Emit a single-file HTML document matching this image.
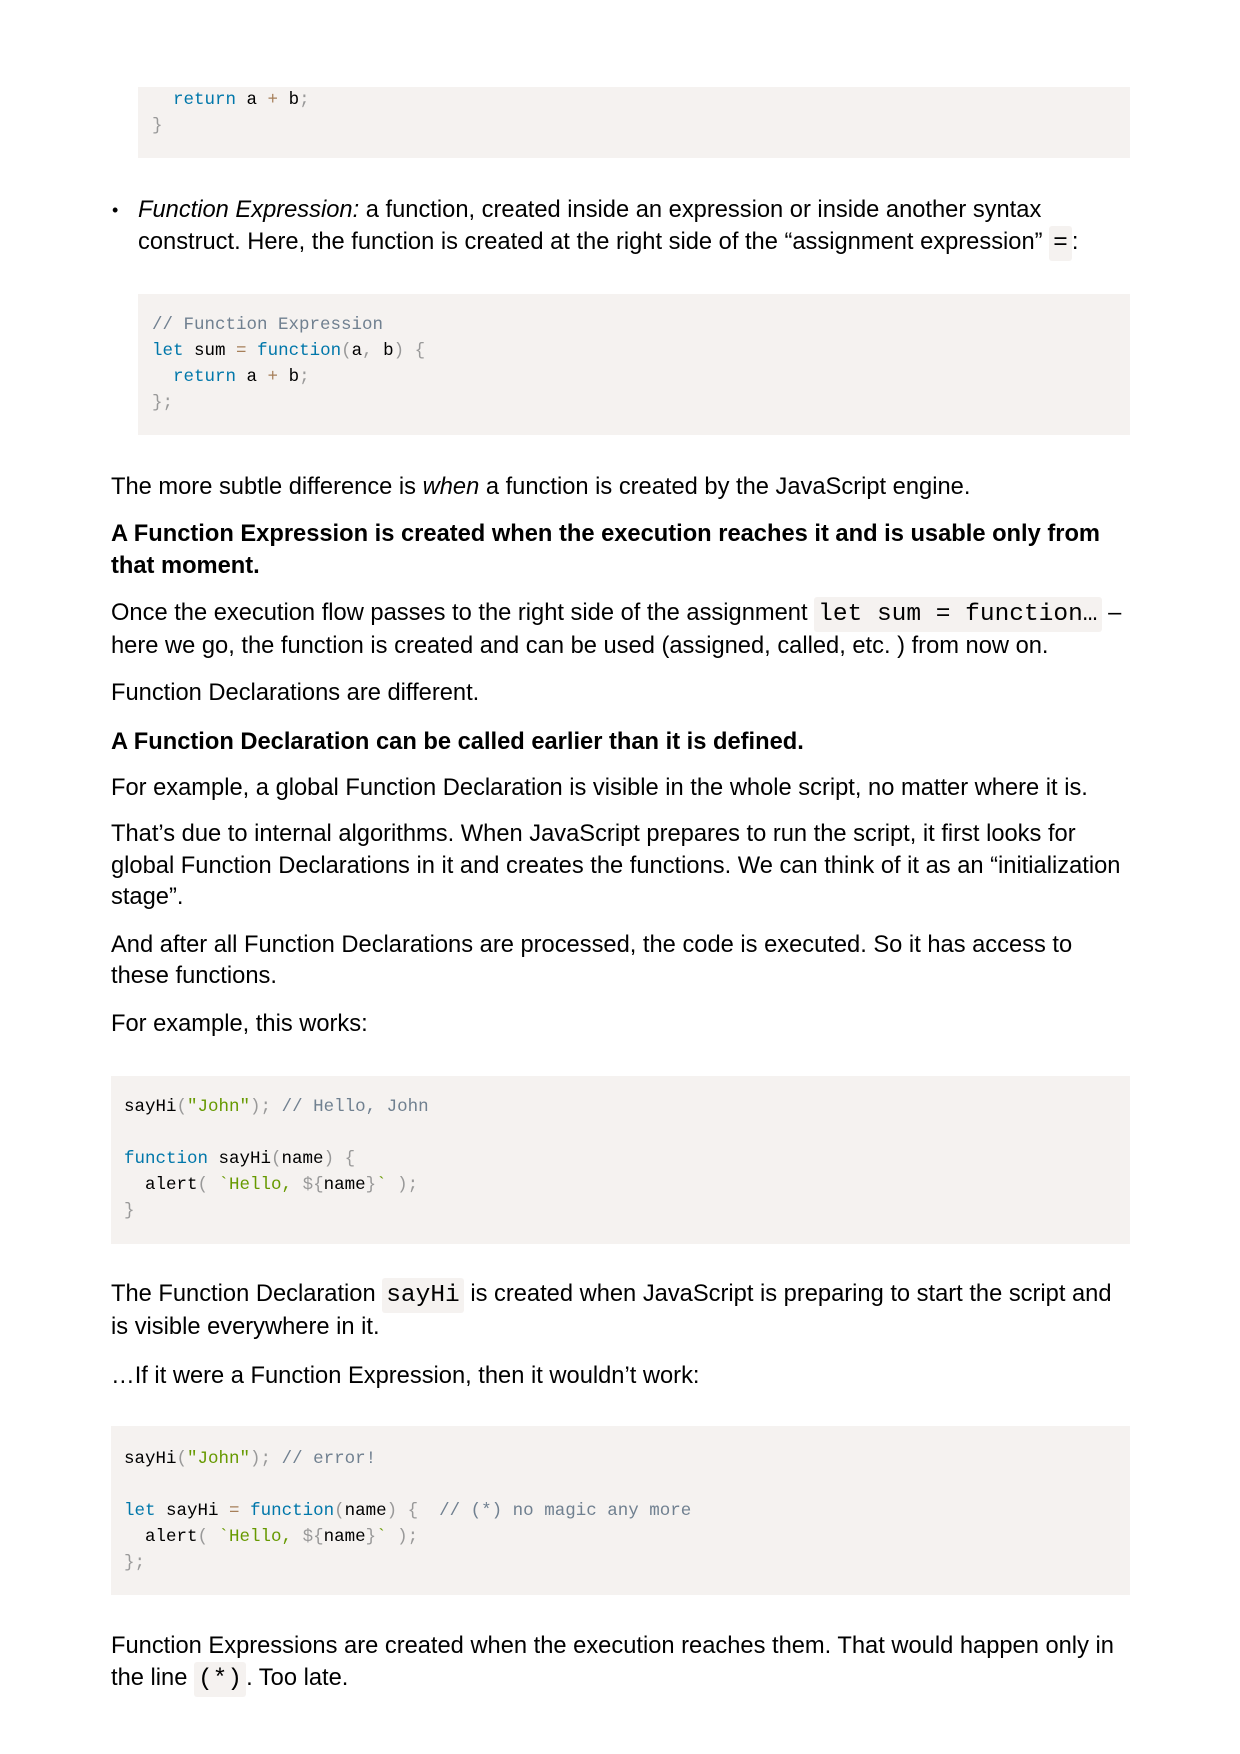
<!DOCTYPE html>
<html><head><meta charset="utf-8"><style>
body{margin:0;width:1240px;height:1754px;background:#fff;position:relative;font-family:"Liberation Sans",Arial,sans-serif;color:#000;overflow:hidden}
.p{position:absolute;left:111px;font-size:23.7px;line-height:32px;white-space:nowrap}
.b{font-weight:bold}
.blk{position:absolute;background:#f5f2f0}
.code{position:absolute;font-family:"Liberation Mono",monospace;font-size:17.5px;line-height:26px;white-space:pre;color:#000}
.k{color:#07a}.s{color:#690}.pu{color:#999}.o{color:#a67f59}.c{color:#708090}
.ic{font-family:"Liberation Mono",monospace;font-size:24.5px;line-height:20px;background:#f5f2f0;padding:4px 4px;border-radius:3px}
</style></head><body>

<div class="blk" style="left:138px;top:87px;width:992px;height:71px"></div>
<div class="code" style="left:152px;top:87px"><span>  </span><span class="k">return</span> a <span class="o">+</span> b<span class="pu">;</span>
<span class="pu">}</span></div>

<div class="p" style="left:112px;top:194px;font-size:18px">•</div>
<div class="p" style="left:138px;top:194px"><i>Function Expression:</i> a function, created inside an expression or inside another syntax<br>construct. Here, the function is created at the right side of the “assignment expression” <span class="ic">=</span>:</div>

<div class="blk" style="left:138px;top:294px;width:992px;height:141px"></div>
<div class="code" style="left:152px;top:312px"><span class="c">// Function Expression</span>
<span class="k">let</span> sum <span class="o">=</span> <span class="k">function</span><span class="pu">(</span>a<span class="pu">,</span> b<span class="pu">)</span> <span class="pu">{</span>
  <span class="k">return</span> a <span class="o">+</span> b<span class="pu">;</span>
<span class="pu">};</span></div>

<div class="p" style="top:471px">The more subtle difference is <i>when</i> a function is created by the JavaScript engine.</div>
<div class="p b" style="top:518px">A Function Expression is created when the execution reaches it and is usable only from<br>that moment.</div>
<div class="p" style="top:597px;line-height:33px">Once the execution flow passes to the right side of the assignment <span class="ic">let sum = function…</span> –<br>here we go, the function is created and can be used (assigned, called, etc. ) from now on.</div>
<div class="p" style="top:677px">Function Declarations are different.</div>
<div class="p b" style="top:726px">A Function Declaration can be called earlier than it is defined.</div>
<div class="p" style="top:772px">For example, a global Function Declaration is visible in the whole script, no matter where it is.</div>
<div class="p" style="top:819px;line-height:31.5px">That’s due to internal algorithms. When JavaScript prepares to run the script, it first looks for<br>global Function Declarations in it and creates the functions. We can think of it as an “initialization<br>stage”.</div>
<div class="p" style="top:930px;line-height:31px">And after all Function Declarations are processed, the code is executed. So it has access to<br>these functions.</div>
<div class="p" style="top:1008px">For example, this works:</div>

<div class="blk" style="left:111px;top:1076px;width:1019px;height:168px"></div>
<div class="code" style="left:124px;top:1094px">sayHi<span class="pu">(</span><span class="s">"John"</span><span class="pu">);</span> <span class="c">// Hello, John</span>

<span class="k">function</span> sayHi<span class="pu">(</span>name<span class="pu">)</span> <span class="pu">{</span>
  alert<span class="pu">(</span> <span class="s">`Hello, </span><span class="pu">${</span>name<span class="pu">}</span><span class="s">`</span> <span class="pu">);</span>
<span class="pu">}</span></div>

<div class="p" style="top:1278px;line-height:33px">The Function Declaration <span class="ic">sayHi</span> is created when JavaScript is preparing to start the script and<br>is visible everywhere in it.</div>
<div class="p" style="top:1360px">…If it were a Function Expression, then it wouldn’t work:</div>

<div class="blk" style="left:111px;top:1426px;width:1019px;height:169px"></div>
<div class="code" style="left:124px;top:1446px">sayHi<span class="pu">(</span><span class="s">"John"</span><span class="pu">);</span> <span class="c">// error!</span>

<span class="k">let</span> sayHi <span class="o">=</span> <span class="k">function</span><span class="pu">(</span>name<span class="pu">)</span> <span class="pu">{</span>  <span class="c">// (*) no magic any more</span>
  alert<span class="pu">(</span> <span class="s">`Hello, </span><span class="pu">${</span>name<span class="pu">}</span><span class="s">`</span> <span class="pu">);</span>
<span class="pu">};</span></div>

<div class="p" style="top:1630px;line-height:32px">Function Expressions are created when the execution reaches them. That would happen only in<br>the line <span class="ic">(*)</span>. Too late.</div>

</body></html>
